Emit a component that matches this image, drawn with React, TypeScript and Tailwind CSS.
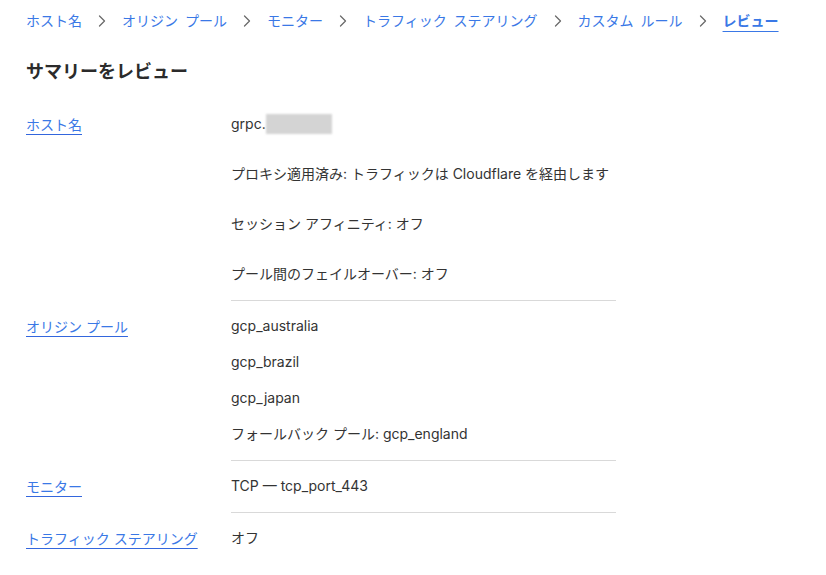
import React from 'react';

const crumbs = ['ホスト名', 'オリジン プール', 'モニター', 'トラフィック ステアリング', 'カスタム ルール'];

const Chevron = () => (
  <svg width="8" height="12" viewBox="0 0 8 12" fill="none" className="shrink-0">
    <polyline points="1.5,1 6.5,6 1.5,11" stroke="#6b6b6b" strokeWidth="1.3" strokeLinecap="round" strokeLinejoin="round" />
  </svg>
);

interface RowProps {
  label: string;
  gap: string;
  last?: boolean;
  children: React.ReactNode;
}

const Row: React.FC<RowProps> = ({ label, gap, last, children }) => (
  <div className="flex">
    <div className="w-[205px] shrink-0 pt-[15px]">
      <a className="text-[#3a78e6] underline underline-offset-[4px] decoration-1 decoration-[#3366dd] leading-5 cursor-pointer">
        {label}
      </a>
    </div>
    <div className={`w-[385px] flex flex-col pt-[15px] ${gap} ${last ? '' : 'pb-4 border-b border-[#d9d9d9]'}`}>
      {children}
    </div>
  </div>
);

export default function App() {
  return (
    <div
      className="min-h-screen bg-white px-[26px] pt-[11px] text-[14px] text-[#333333]"
      style={{ fontFamily: 'Inter, "Noto Sans CJK JP", sans-serif' }}
    >
      <nav className="flex items-center h-5 gap-4">
        {crumbs.map((c) => (
          <React.Fragment key={c}>
            <a className="text-[#3a78e6] leading-5 cursor-pointer [word-spacing:3px]">{c}</a>
            <Chevron />
          </React.Fragment>
        ))}
        <span className="text-[#3a78e6] font-bold leading-5 underline underline-offset-[5px] decoration-1">レビュー</span>
      </nav>

      <h2 className="mt-[27px] text-[18px] font-bold leading-7 text-[#2b2b2b]">サマリーをレビュー</h2>

      <div className="mt-[13px] flex flex-col">
        <Row label="ホスト名" gap="gap-[30px]">
          <p className="leading-5 flex items-center">
            grpc.
            <span className="inline-block w-[66px] h-[20px] bg-[#d4d4d4] blur-[1px]" />
          </p>
          <p className="leading-5">プロキシ適用済み: トラフィックは Cloudflare を経由します</p>
          <p className="leading-5">セッション アフィニティ: オフ</p>
          <p className="leading-5">プール間のフェイルオーバー: オフ</p>
        </Row>
        <Row label="オリジン プール" gap="gap-4">
          <p className="leading-5">gcp_australia</p>
          <p className="leading-5">gcp_brazil</p>
          <p className="leading-5">gcp_japan</p>
          <p className="leading-5">フォールバック プール: gcp_england</p>
        </Row>
        <Row label="モニター" gap="gap-4">
          <p className="leading-5">TCP — tcp_port_443</p>
        </Row>
        <Row label="トラフィック ステアリング" gap="gap-4" last>
          <p className="leading-5">オフ</p>
        </Row>
      </div>
    </div>
  );
}
